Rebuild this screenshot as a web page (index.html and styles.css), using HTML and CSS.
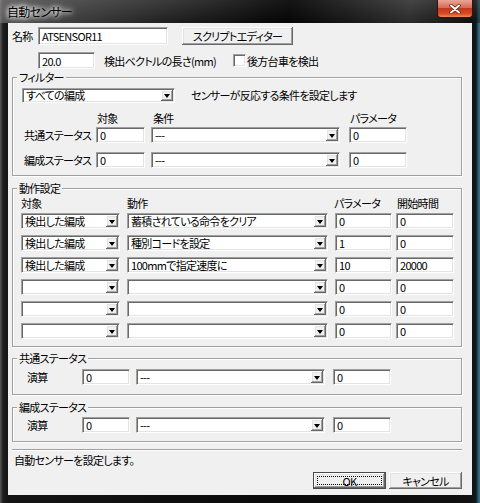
FILE: index.html
```html
<!DOCTYPE html>
<html lang="ja">
<head>
  <meta charset="UTF-8" />
  <meta name="viewport" content="width=device-width, initial-scale=1.0"/>
  <title>自動センサー</title>
  <link rel="stylesheet" href="styles.css">
</head>
<body>
  <div class="window">
    <div class="titlebar">
      <span class="title">自動センサー</span>
      <span class="close-btn">
        <svg width="14" height="10" viewBox="0 0 14 10"><path d="M3 1.5 L11 8.5 M11 1.5 L3 8.5" stroke="#5a1a10" stroke-width="3.4" stroke-linecap="round"/><path d="M3 1.5 L11 8.5 M11 1.5 L3 8.5" stroke="#fff" stroke-width="2" stroke-linecap="round"/></svg>
      </span>
    </div>

    <div class="client">
      <div class="name-row">
        <label class="name-label">名称</label>
        <input type="text" class="edit name-edit" value="ATSENSOR11">
        <button class="btn script-btn">スクリプトエディター</button>
      </div>

      <div class="length-row">
        <input type="text" class="edit length-edit" value="20.0">
        <span class="length-label">検出ベクトルの長さ(mm)</span>
        <span class="checkbox"></span>
        <span class="check-label">後方台車を検出</span>
      </div>

      <fieldset class="group filter-group">
        <legend>フィルター</legend>
        <div class="filter-top">
          <div class="combo filter-combo"><span class="combo-text">すべての編成</span><span class="drop"></span></div>
          <span class="filter-note">センサーが反応する条件を設定します</span>
        </div>
        <div class="head-row filter-head">
          <span class="fh-target">対象</span>
          <span class="fh-cond">条件</span>
          <span>パラメータ</span>
        </div>
        <div class="filter-row">
          <span class="filter-label">共通ステータス</span>
          <input type="text" class="edit f-target" value="0">
          <div class="combo f-cond"><span class="combo-text">---</span><span class="drop"></span></div>
          <input type="text" class="edit f-param" value="0">
        </div>
        <div class="filter-row second">
          <span class="filter-label">編成ステータス</span>
          <input type="text" class="edit f-target" value="0">
          <div class="combo f-cond"><span class="combo-text">---</span><span class="drop"></span></div>
          <input type="text" class="edit f-param" value="0">
        </div>
      </fieldset>

      <fieldset class="group action-group">
        <legend>動作設定</legend>
        <div class="head-row action-head">
          <span class="ah-target">対象</span>
          <span class="ah-action">動作</span>
          <span class="ah-param">パラメータ</span>
          <span>開始時間</span>
        </div>
        <div class="action-row">
          <div class="combo a-target"><span class="combo-text">検出した編成</span><span class="drop"></span></div>
          <div class="combo a-action"><span class="combo-text">蓄積されている命令をクリア</span><span class="drop"></span></div>
          <input type="text" class="edit a-param" value="0">
          <input type="text" class="edit a-start" value="0">
        </div>
        <div class="action-row">
          <div class="combo a-target"><span class="combo-text">検出した編成</span><span class="drop"></span></div>
          <div class="combo a-action"><span class="combo-text">種別コードを設定</span><span class="drop"></span></div>
          <input type="text" class="edit a-param" value="1">
          <input type="text" class="edit a-start" value="0">
        </div>
        <div class="action-row">
          <div class="combo a-target"><span class="combo-text">検出した編成</span><span class="drop"></span></div>
          <div class="combo a-action"><span class="combo-text">100mmで指定速度に</span><span class="drop"></span></div>
          <input type="text" class="edit a-param" value="10">
          <input type="text" class="edit a-start" value="20000">
        </div>
        <div class="action-row">
          <div class="combo a-target"><span class="combo-text"></span><span class="drop"></span></div>
          <div class="combo a-action"><span class="combo-text"></span><span class="drop"></span></div>
          <input type="text" class="edit a-param" value="0">
          <input type="text" class="edit a-start" value="0">
        </div>
        <div class="action-row">
          <div class="combo a-target"><span class="combo-text"></span><span class="drop"></span></div>
          <div class="combo a-action"><span class="combo-text"></span><span class="drop"></span></div>
          <input type="text" class="edit a-param" value="0">
          <input type="text" class="edit a-start" value="0">
        </div>
        <div class="action-row">
          <div class="combo a-target"><span class="combo-text"></span><span class="drop"></span></div>
          <div class="combo a-action"><span class="combo-text"></span><span class="drop"></span></div>
          <input type="text" class="edit a-param" value="0">
          <input type="text" class="edit a-start" value="0">
        </div>
      </fieldset>

      <fieldset class="group calc-group">
        <legend>共通ステータス</legend>
        <div class="calc-row">
          <span class="calc-label">演算</span>
          <input type="text" class="edit c-value" value="0">
          <div class="combo c-op"><span class="combo-text">---</span><span class="drop"></span></div>
          <input type="text" class="edit c-param" value="0">
        </div>
      </fieldset>

      <fieldset class="group calc-group second-calc">
        <legend>編成ステータス</legend>
        <div class="calc-row">
          <span class="calc-label">演算</span>
          <input type="text" class="edit c-value" value="0">
          <div class="combo c-op"><span class="combo-text">---</span><span class="drop"></span></div>
          <input type="text" class="edit c-param" value="0">
        </div>
      </fieldset>

      <div class="separator"></div>
      <div class="status-text">自動センサーを設定します。</div>

      <div class="button-row">
        <button class="btn ok-btn">OK</button>
        <button class="btn cancel-btn">キャンセル</button>
      </div>
    </div>
  </div>
</body>
</html>
```

FILE: styles.css
```css
body {
  margin: 0;
  padding: 0;
  background: #000;
  font-family: "Noto Sans CJK JP", "Noto Sans", sans-serif;
  font-size: 11px;
  font-feature-settings: "palt";
  letter-spacing: -0.7px;
  color: #000;
}

.window {
  width: 480px;
  height: 503px;
  overflow: hidden;
  background:
    linear-gradient(to bottom, rgba(255, 255, 255, 0.18), rgba(255, 255, 255, 0) 24px),
    linear-gradient(to right, #5a5a5a 0, #1e1e1e 3px, #141414 8px, #0a0a0a 60%, #111 472px, #0b1a22 476px, #3b6f80 479px);
}

.titlebar {
  height: 23px;
  display: flex;
  align-items: flex-start;
  background: linear-gradient(100deg, rgba(130, 130, 130, 0.55) 0, rgba(60, 60, 60, 0.35) 35%, rgba(0, 0, 0, 0.6) 60%, rgba(90, 90, 90, 0.35) 85%, rgba(0, 0, 0, 0.4) 100%);
}

.title {
  margin: 5px 0 0 7px;
  font-size: 12px;
  line-height: 14px;
  color: #000;
  text-shadow: 0 0 4px #fff, 0 0 6px #fff, 0 0 8px rgba(255, 255, 255, 0.8);
}

.close-btn {
  margin-left: auto;
  margin-right: 7px;
  width: 36px;
  height: 18px;
  border: 1px solid #3a1008;
  border-top: none;
  border-radius: 0 0 4px 4px;
  box-sizing: border-box;
  background: linear-gradient(to bottom, #e9a897 0, #d66b55 45%, #c23a1c 50%, #d84a22 80%, #ef8a5a 100%);
  display: flex;
  align-items: center;
  justify-content: center;
}

.client {
  margin: 0 8px;
  height: 472px;
  background: #f0f0f0;
  overflow: hidden;
}

/* classic 3d controls */
.edit {
  box-sizing: border-box;
  height: 16px;
  margin: 0;
  padding: 0 0 0 3px;
  border: 1px solid;
  border-color: #a0a0a0 #fff #fff #a0a0a0;
  box-shadow: inset 1px 1px #696969, inset -1px -1px #e3e3e3;
  background: #fff;
  font: inherit;
  letter-spacing: inherit;
  color: #000;
  outline: none;
}

.combo {
  box-sizing: border-box;
  height: 16px;
  display: flex;
  align-items: center;
  padding: 1px;
  border: 1px solid;
  border-color: #a0a0a0 #fff #fff #a0a0a0;
  box-shadow: inset 1px 1px #696969, inset -1px -1px #e3e3e3;
  background: #fff;
}

.combo-text {
  flex: 1;
  padding-left: 2px;
  line-height: 12px;
  white-space: nowrap;
}

.drop {
  width: 12px;
  align-self: stretch;
  background: #f0f0f0;
  box-shadow: inset -1px -1px #696969, inset 1px 1px #fff, inset -2px -2px #a0a0a0, inset 2px 2px #e3e3e3;
  display: flex;
  align-items: center;
  justify-content: center;
}

.drop::after {
  content: "";
  margin-top: 1px;
  border-style: solid;
  border-width: 4px 3.5px 0 3.5px;
  border-color: #000 transparent transparent transparent;
}

.btn {
  box-sizing: border-box;
  margin: 0;
  padding: 0;
  border: none;
  background: #f0f0f0;
  box-shadow: inset -1px -1px #696969, inset 1px 1px #fff, inset -2px -2px #a0a0a0, inset 2px 2px #e3e3e3;
  font: inherit;
  letter-spacing: inherit;
  color: #000;
}

.checkbox {
  box-sizing: border-box;
  width: 13px;
  height: 13px;
  border: 1px solid;
  border-color: #a0a0a0 #fff #fff #a0a0a0;
  box-shadow: inset 1px 1px #696969, inset -1px -1px #e3e3e3;
  background: #fff;
}

/* top rows */
.name-row {
  display: flex;
  align-items: center;
  height: 18px;
  margin-top: 4px;
}

.name-label {
  margin-left: 4px;
  width: 26px;
}

.name-edit {
  width: 130px;
  height: 18px;
}

.script-btn {
  margin-left: 14px;
  width: 111px;
  height: 18px;
}

.length-row {
  display: flex;
  align-items: center;
  height: 17px;
  margin-top: 7px;
}

.length-edit {
  margin-left: 30px;
  width: 57px;
  height: 17px;
}

.length-label {
  margin-left: 9px;
  width: 129px;
}

.check-label {
  margin-left: 1px;
}

/* group boxes */
.group {
  margin: 2px 0 0 4px;
  padding: 0 0 7px 0;
  width: 450px;
  box-sizing: border-box;
  min-inline-size: 0;
  border: 1px solid #a0a0a0;
  box-shadow: inset 1px 1px #fff, 1px 1px 0 #fff;
}

.group legend {
  margin-left: 4px;
  padding: 0 2px;
  line-height: 12px;
  background: #f0f0f0;
}

.filter-top {
  display: flex;
  align-items: center;
  margin-top: 4px;
}

.filter-combo {
  margin-left: 9px;
  width: 153px;
  height: 15px;
}

.filter-note {
  margin-left: 16px;
}

.head-row {
  display: flex;
  line-height: 12px;
}

.filter-head {
  margin-top: 9px;
}

.fh-target {
  margin-left: 84px;
  width: 56px;
}

.fh-cond {
  width: 197px;
}

.filter-row {
  display: flex;
  align-items: center;
  margin-top: 3px;
}

.filter-row.second {
  margin-top: 9px;
}

.filter-label {
  margin-left: 11px;
  width: 72px;
}

.f-target {
  width: 49px;
}

.f-cond {
  margin-left: 6px;
  width: 189px;
}

.f-param {
  margin-left: 9px;
  width: 58px;
}

.action-group {
  margin-top: 6px;
}

.action-head {
  margin-top: 3px;
}

.ah-target {
  margin-left: 8px;
  width: 106px;
}

.ah-action {
  width: 207px;
}

.ah-param {
  width: 63px;
}

.action-row {
  display: flex;
  margin-top: 6px;
}

.action-head + .action-row {
  margin-top: 4px;
}

.a-target {
  margin-left: 8px;
  width: 99px;
}

.a-action {
  margin-left: 7px;
  width: 201px;
}

.a-param {
  margin-left: 7px;
  width: 57px;
}

.a-start {
  margin-left: 4px;
  width: 58px;
}

.calc-group {
  margin-top: 5px;
  padding-bottom: 9px;
}

.calc-group.second-calc {
  margin-top: 6px;
  padding-bottom: 8px;
}

.calc-row {
  display: flex;
  align-items: center;
  margin-top: 5px;
}

.second-calc .calc-row {
  margin-top: 4px;
}

.calc-label {
  margin-left: 14px;
  width: 55px;
}

.c-value {
  width: 48px;
}

.c-op {
  margin-left: 6px;
  width: 189px;
}

.c-param {
  margin-left: 8px;
  width: 58px;
}

/* bottom area */
.separator {
  margin: 7px 0 0 4px;
  width: 450px;
  border-top: 1px solid #a0a0a0;
  border-bottom: 1px solid #fff;
}

.status-text {
  margin: 3px 0 0 6px;
  line-height: 12px;
}

.button-row {
  display: flex;
  margin-top: 6px;
  padding-left: 305px;
}

.ok-btn,
.cancel-btn {
  width: 73px;
  height: 17px;
  position: relative;
}

.ok-btn {
  border: 1px solid #4a4a4a;
}

.ok-btn::after {
  content: "";
  position: absolute;
  top: 3px;
  left: 3px;
  right: 3px;
  bottom: 3px;
  border: 1px dotted #000;
}

.cancel-btn {
  margin-left: 3px;
}
```
